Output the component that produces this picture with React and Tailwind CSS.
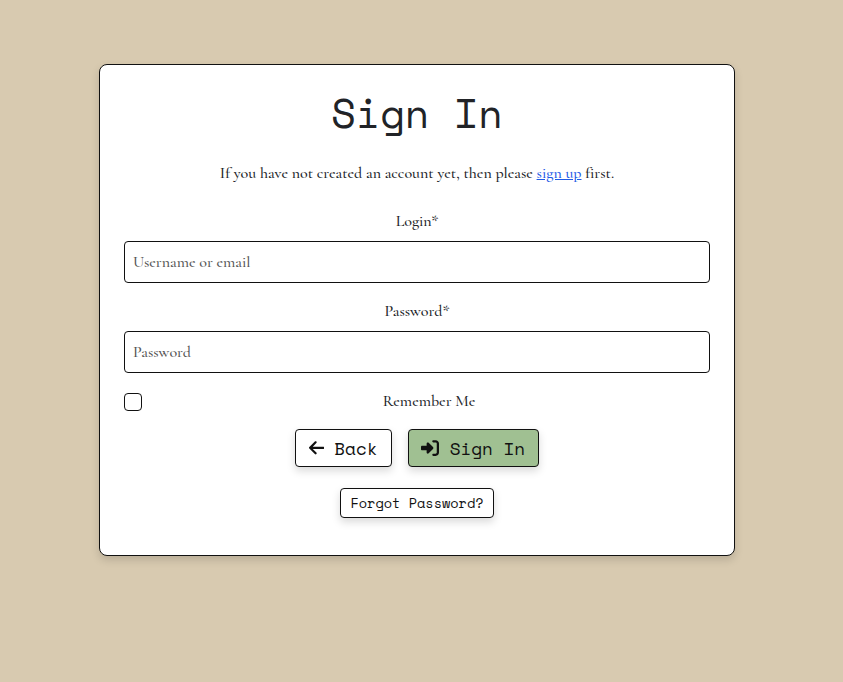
import { FaArrowLeft, FaRightToBracket } from "react-icons/fa6";

const mono = "font-['Space_Mono','DejaVu_Sans_Mono',monospace] font-normal tracking-normal";
const button =
  "flex items-center justify-center rounded border border-[#111] text-[#111] whitespace-nowrap shadow-[0_4px_8px_rgba(0,0,0,0.15)]";

function Field({ label, type, placeholder }) {
  return (
    <label className="flex w-full flex-col">
      <span className="h-6 text-center leading-6">{label}</span>
      <input
        type={type}
        placeholder={placeholder}
        className="mt-2 h-[42px] w-full rounded border border-[#111] bg-white px-2 placeholder:text-[#555]"
      />
    </label>
  );
}

export default function App() {
  return (
    <div className="flex h-[682px] w-[843px] items-start bg-[#d8cab0] pl-[99px] pt-16 font-['Cormorant_Garamond','Liberation_Serif',serif] text-base font-medium tracking-[-0.025px] text-[#212327]">
      <main className="flex h-[492px] w-[636px] flex-col items-center rounded-lg border border-[#111] bg-white px-6 pt-6 shadow-[0_4px_8px_rgba(0,0,0,0.15)]">
        <h1 className={`h-12 text-[40px] leading-12 ${mono}`}>Sign In</h1>
        <p className="mt-6 h-6 whitespace-nowrap leading-6">
          If you have not created an account yet, then please{" "}
          <a href="#" className="text-[#1f5be6] underline">sign up</a> first.
        </p>
        <form className="flex w-full flex-col items-center gap-4 pt-6">
          <Field label="Login*" type="text" placeholder="Username or email" />
          <Field label="Password*" type="password" placeholder="Password" />
          <label className="flex h-6 w-full items-center">
            <input
              type="checkbox"
              className="mt-0.5 size-[18px] shrink-0 appearance-none rounded border border-[#111] bg-white"
            />
            <span className="ml-1.5 flex-1 text-center">Remember Me</span>
          </label>
          <div className={`flex gap-4 text-[17.6px] ${mono}`}>
            <button type="button" className={`${button} h-[38px] w-[97px] gap-[10.4px] bg-white pr-px`}>
              <FaArrowLeft className="h-[17.6px] w-[15.4px]" />
              <span>Back</span>
            </button>
            <button type="button" className={`${button} h-[38px] w-[131px] gap-[10.8px] bg-[#a0c092] pr-px`}>
              <FaRightToBracket className="size-[18px]" />
              <span>Sign In</span>
            </button>
          </div>
          <button type="button" className={`${button} mt-[5px] h-[30px] w-[154px] bg-white text-[13.6px] ${mono}`}>
            Forgot Password?
          </button>
        </form>
      </main>
    </div>
  );
}
